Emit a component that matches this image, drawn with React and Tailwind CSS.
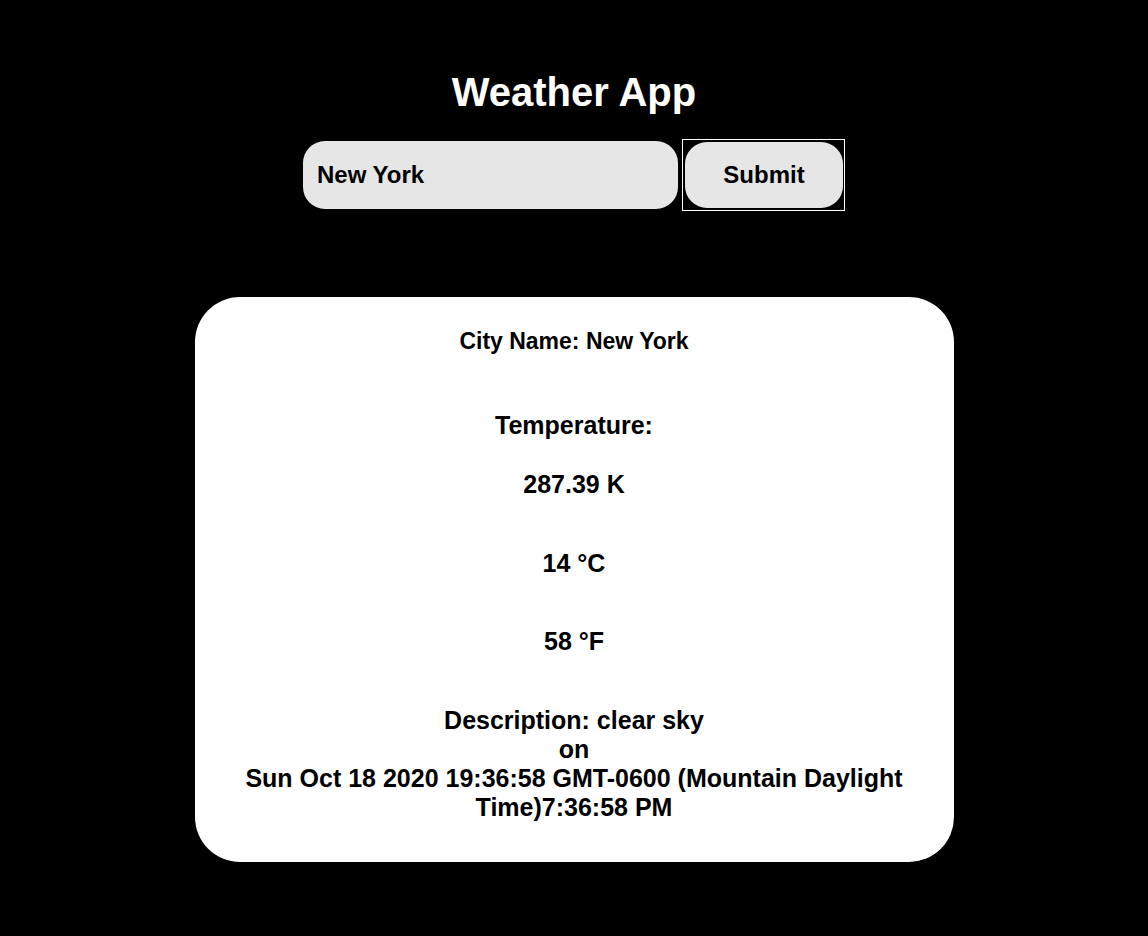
export default function App() {
  return (
    <div className="min-h-[936px] bg-black font-['Liberation_Sans',Arial,sans-serif] font-bold">
      <div className="flex flex-col items-center pt-[69px]">
        <h1 className="text-[40px] leading-[46px] text-white">Weather App</h1>

        <form className="mt-[24px] flex items-center gap-[4px]" onSubmit={(e) => e.preventDefault()}>
          <input
            type="text"
            defaultValue="New York"
            className="h-[68px] w-[375px] rounded-[22px] bg-[#e6e6e6] pl-[14px] text-[24px] font-bold text-black outline-none"
          />
          <div className="border border-white bg-black py-[2px] pl-[2px] pr-[1px]">
            <button
              type="submit"
              className="flex h-[66px] w-[158px] items-center justify-center rounded-[22px] bg-[#e6e6e6] text-[24px] font-bold text-black"
            >
              Submit
            </button>
          </div>
        </form>

        <div className="mt-[86px] w-[759px] rounded-[45px] bg-white px-[40px] pb-[40px] pt-[31px] text-center text-black">
          <p className="text-[23px] leading-[27px]">City Name: New York</p>
          <p className="mt-[56px] text-[25px] leading-[29px]">Temperature:</p>
          <p className="mt-[30px] text-[25px] leading-[29px]">287.39 K</p>
          <p className="mt-[50px] text-[25px] leading-[29px]">14 °C</p>
          <p className="mt-[49px] text-[25px] leading-[29px]">58 °F</p>
          <div className="mt-[50px] text-[25px] leading-[29px]">
            <p>Description: clear sky</p>
            <p>on</p>
            <p>Sun Oct 18 2020 19:36:58 GMT-0600 (Mountain Daylight Time)7:36:58 PM</p>
          </div>
        </div>
      </div>
    </div>
  );
}
